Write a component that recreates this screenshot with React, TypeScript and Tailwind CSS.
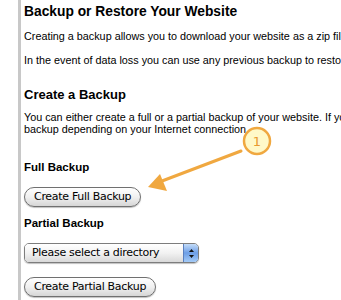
import React from "react";

function AquaButton({ label }: { label: string }) {
  return (
    <button
      type="button"
      className="h-[20px] rounded-full border border-[#707070] bg-gradient-to-b from-white via-[#f0f0f0] to-[#d6d6d6] px-[9px] text-[11px] leading-[18px] tracking-[-0.3px] text-black shadow-[0_1px_1px_rgba(0,0,0,0.25)] [font-family:'DejaVu_Sans',sans-serif]"
    >
      {label}
    </button>
  );
}

function AquaSelect() {
  return (
    <div className="flex h-[20px] w-[175px] overflow-hidden rounded-[5px] border border-[#7d7d7d] shadow-[0_1px_1px_rgba(0,0,0,0.25)] [font-family:'DejaVu_Sans',sans-serif]">
      <div className="flex flex-1 items-center bg-gradient-to-b from-white via-[#f2f2f2] to-[#d9d9d9] pl-[7px] text-[11px] tracking-[-0.3px] text-black">
        Please select a directory
      </div>
      <div className="flex w-[15px] flex-col items-center justify-center border-l border-[#5a7fbf] bg-gradient-to-b from-[#c4dcf8] via-[#6d9ee6] to-[#a4cbf7]">
        <svg width="7" height="11" viewBox="0 0 7 11">
          <path d="M3.5 1 L6 4 L1 4 Z" fill="#111" />
          <path d="M3.5 10 L6 7 L1 7 Z" fill="#111" />
        </svg>
      </div>
    </div>
  );
}

export default function App() {
  return (
    <div className="relative h-[300px] w-[341px] overflow-hidden bg-white text-black [font-family:'Liberation_Sans',Arial,sans-serif]">
      <div className="flex h-full">
        <div className="ml-[18px] w-[3px] shrink-0 bg-[#c8c8c8]" />
        <div className="flex flex-col pl-[3px]">
          <h1 className="mt-[3px] whitespace-nowrap text-[13.8px] font-bold leading-[18px]">
            Backup or Restore Your Website
          </h1>
          <p className="mt-[8px] whitespace-nowrap text-[10.8px] leading-[14px]">
            Creating a backup allows you to download your website as a zip file to your computer.
          </p>
          <p className="mt-[10px] whitespace-nowrap text-[10.8px] leading-[14px]">
            In the event of data loss you can use any previous backup to restore your website.
          </p>
          <h2 className="mt-[20px] whitespace-nowrap text-[13px] font-bold leading-[16px]">
            Create a Backup
          </h2>
          <p className="mt-[8px] whitespace-nowrap text-[10.8px] leading-[12px]">
            You can either create a full or a partial backup of your website. If you have a large website,
            <br />
            backup depending on your Internet connection.
          </p>
          <h3 className="mt-[25px] text-[11.5px] font-bold leading-[14px]">Full Backup</h3>
          <div className="mt-[9px]">
            <AquaButton label="Create Full Backup" />
          </div>
          <h3 className="mt-[9px] text-[11.5px] font-bold leading-[14px]">Partial Backup</h3>
          <div className="mt-[13px]">
            <AquaSelect />
          </div>
          <div className="mt-[10px]">
            <AquaButton label="Create Partial Backup" />
          </div>
        </div>
      </div>

      <svg className="pointer-events-none absolute left-0 top-0" width="341" height="300">
        <line x1="241" y1="151" x2="162" y2="181" stroke="#f0a840" strokeWidth="3" strokeLinecap="round" />
        <path d="M148 187 L160 174 L167 191 Z" fill="#f0a840" />
        <circle cx="257" cy="141" r="13" fill="#fff9c8" stroke="#f0a840" strokeWidth="2.5" />
        <text x="257" y="146" textAnchor="middle" fontSize="13" fill="#e89a30" fontFamily="DejaVu Sans, sans-serif">1</text>
      </svg>
    </div>
  );
}
